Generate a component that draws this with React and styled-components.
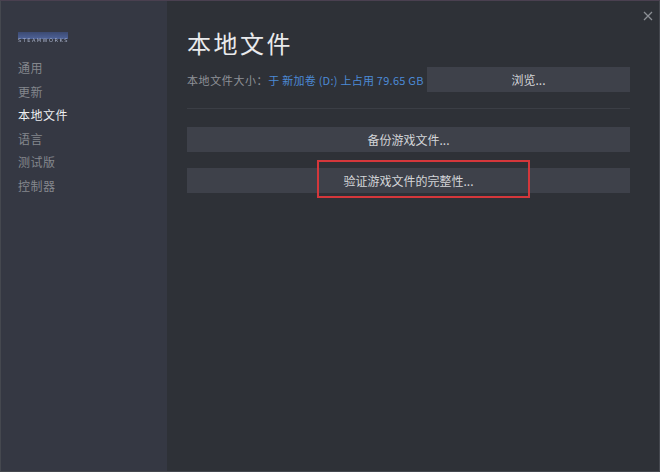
import React from 'react';
import styled, { createGlobalStyle } from 'styled-components';

const GlobalStyle = createGlobalStyle`
  html, body {
    margin: 0;
    padding: 0;
    background: #2e3137;
  }
  body {
    font-family: "Noto Sans CJK SC", "Noto Sans", sans-serif;
  }
`;

const Window = styled.div`
  display: flex;
  width: 660px;
  height: 472px;
  box-sizing: border-box;
  border: 1px solid #45484f;
  border-top-color: #4a4050;
  background: #2e3137;
  position: relative;
  overflow: hidden;
`;

const Sidebar = styled.nav`
  width: 166px;
  flex-shrink: 0;
  background: #353843;
  padding: 31px 0 0 17px;
  box-sizing: border-box;
  display: flex;
  flex-direction: column;
`;

const Logo = styled.div`
  width: 50px;
  height: 11px;
  margin: 0 0 13px 0;
  display: flex;
  flex-direction: column;
  justify-content: flex-end;
  filter: blur(0.7px);
  background: linear-gradient(180deg, #3c4a72 0%, #4d6196 60%, transparent 62%);
  font-family: "DejaVu Sans", sans-serif;
  font-size: 5px;
  letter-spacing: 1.5px;
  color: #aab3cc;
  line-height: 5px;
`;

const NavItem = styled.div`
  font-size: 12px;
  line-height: 23.5px;
  color: ${(p) => (p.active ? '#eceef0' : '#84878d')};
  letter-spacing: 0.5px;
`;

const Main = styled.main`
  flex: 1;
  min-width: 0;
  padding: 24px 29px 0 20px;
  display: flex;
  flex-direction: column;
`;

const Title = styled.h1`
  margin: 0;
  font-size: 24px;
  font-weight: 400;
  line-height: 36px;
  color: #e9eaec;
  letter-spacing: 2.5px;
`;

const SizeRow = styled.div`
  display: flex;
  align-items: center;
  margin-top: 6px;
`;

const Label = styled.span`
  font-size: 11px;
  color: #8e9197;
  white-space: nowrap;
  letter-spacing: 0.6px;
`;

const Usage = styled.span`
  font-size: 11px;
  color: #4c8ad6;
  white-space: nowrap;
  letter-spacing: 0.25px;
  flex: 1;
  min-width: 0;
  overflow: hidden;
`;

const Button = styled.div`
  height: 25px;
  background: #3e414a;
  color: #d4d6d9;
  font-size: 12px;
  display: flex;
  align-items: center;
  justify-content: center;
  width: ${(p) => p.width || 'auto'};
  flex-shrink: 0;
  position: relative;
`;

const Divider = styled.div`
  height: 1px;
  background: #3b3e45;
  margin: 16px 0 18px;
`;

const Stack = styled.div`
  display: flex;
  flex-direction: column;
  gap: 16px;
`;

const Highlight = styled.div`
  position: absolute;
  left: 130px;
  top: -8px;
  width: 213px;
  height: 38px;
  box-sizing: border-box;
  border: 2px solid #d4373b;
`;

const Close = styled.div`
  position: absolute;
  right: 4px;
  top: 3px;
  width: 14px;
  height: 14px;
`;

const navItems = ['通用', '更新', '本地文件', '语言', '测试版', '控制器'];

export default function App() {
  return (
    <>
      <GlobalStyle />
      <Window>
        <Sidebar>
          <Logo>STEAMWORKS</Logo>
          {navItems.map((item) => (
            <NavItem key={item} active={item === '本地文件'}>{item}</NavItem>
          ))}
        </Sidebar>
        <Main>
          <Title>本地文件</Title>
          <SizeRow>
            <Label>本地文件大小：</Label>
            <Usage>于 新加卷 (D:) 上占用 79.65 GB</Usage>
            <Button width="203px">浏览...</Button>
          </SizeRow>
          <Divider />
          <Stack>
            <Button>备份游戏文件...</Button>
            <Button>
              验证游戏文件的完整性...
              <Highlight />
            </Button>
          </Stack>
        </Main>
        <Close>
          <svg width="14" height="14" viewBox="0 0 14 14">
            <path d="M3 3 L11 11 M11 3 L3 11" stroke="#8c8f95" strokeWidth="1.3" />
          </svg>
        </Close>
      </Window>
    </>
  );
}
